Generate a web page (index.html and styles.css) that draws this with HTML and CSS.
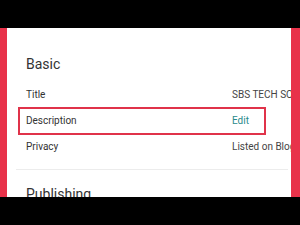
FILE: index.html
```html
<!DOCTYPE html>
<html lang="en">
<head>
    <meta charset="UTF-8">
    <title>Video details</title>
    <link rel="stylesheet" href="styles.css">
</head>
<body>

<div class="frame">
    <div class="side side-left"></div>

    <div class="panel">
        <div class="section">
            <h2>Basic</h2>
            <div class="row">
                <span class="label">Title</span>
                <span class="value">SBS TECH SOLUTIONS</span>
            </div>
            <div class="row">
                <span class="label">Description</span>
                <span class="value edit">Edit</span>
                <span class="highlight"></span>
            </div>
            <div class="row">
                <span class="label">Privacy</span>
                <span class="value">Listed on Blogger</span>
            </div>
        </div>
        <div class="divider"></div>
        <div class="section">
            <h2 class="next">Publishing</h2>
        </div>
    </div>

    <div class="side side-right"></div>
</div>

</body>
</html>
```

FILE: styles.css
```css
body {
    margin: 0;
    background-color: #000;
    font-family: Roboto, "Liberation Sans", sans-serif;
    height: 225px;
    overflow: hidden;
}

/* Phone frame between the black bars */
.frame {
    display: flex;
    margin-top: 28px;
    height: 169px;
}

.side {
    background-color: #e8324a;
}

.side-left {
    width: 7px;
}

.side-right {
    width: 9px;
}

.panel {
    flex: 1;
    background-color: #fff;
    padding: 0 3px 0 9px;
    overflow: hidden;
}

.section {
    padding-left: 10px;
}

.section h2 {
    margin: 26px 0 8px;
    font-size: 14px;
    font-weight: 400;
    line-height: 20px;
    color: #333;
}

.section h2.next {
    margin-top: 14px;
}

.row {
    position: relative;
    display: flex;
    height: 26px;
    line-height: 26px;
    font-size: 10px;
    white-space: nowrap;
}

.label {
    width: 206px;
    flex-shrink: 0;
    color: #333;
}

.value {
    color: #444;
}

.value.edit {
    color: #2a8a8c;
}

/* red annotation box */
.highlight {
    position: absolute;
    left: -8px;
    top: -1px;
    width: 248px;
    height: 28px;
    box-sizing: border-box;
    border: 2px solid #e0334a;
}

.divider {
    height: 1px;
    background-color: #ececec;
    margin-top: 9px;
}
```
